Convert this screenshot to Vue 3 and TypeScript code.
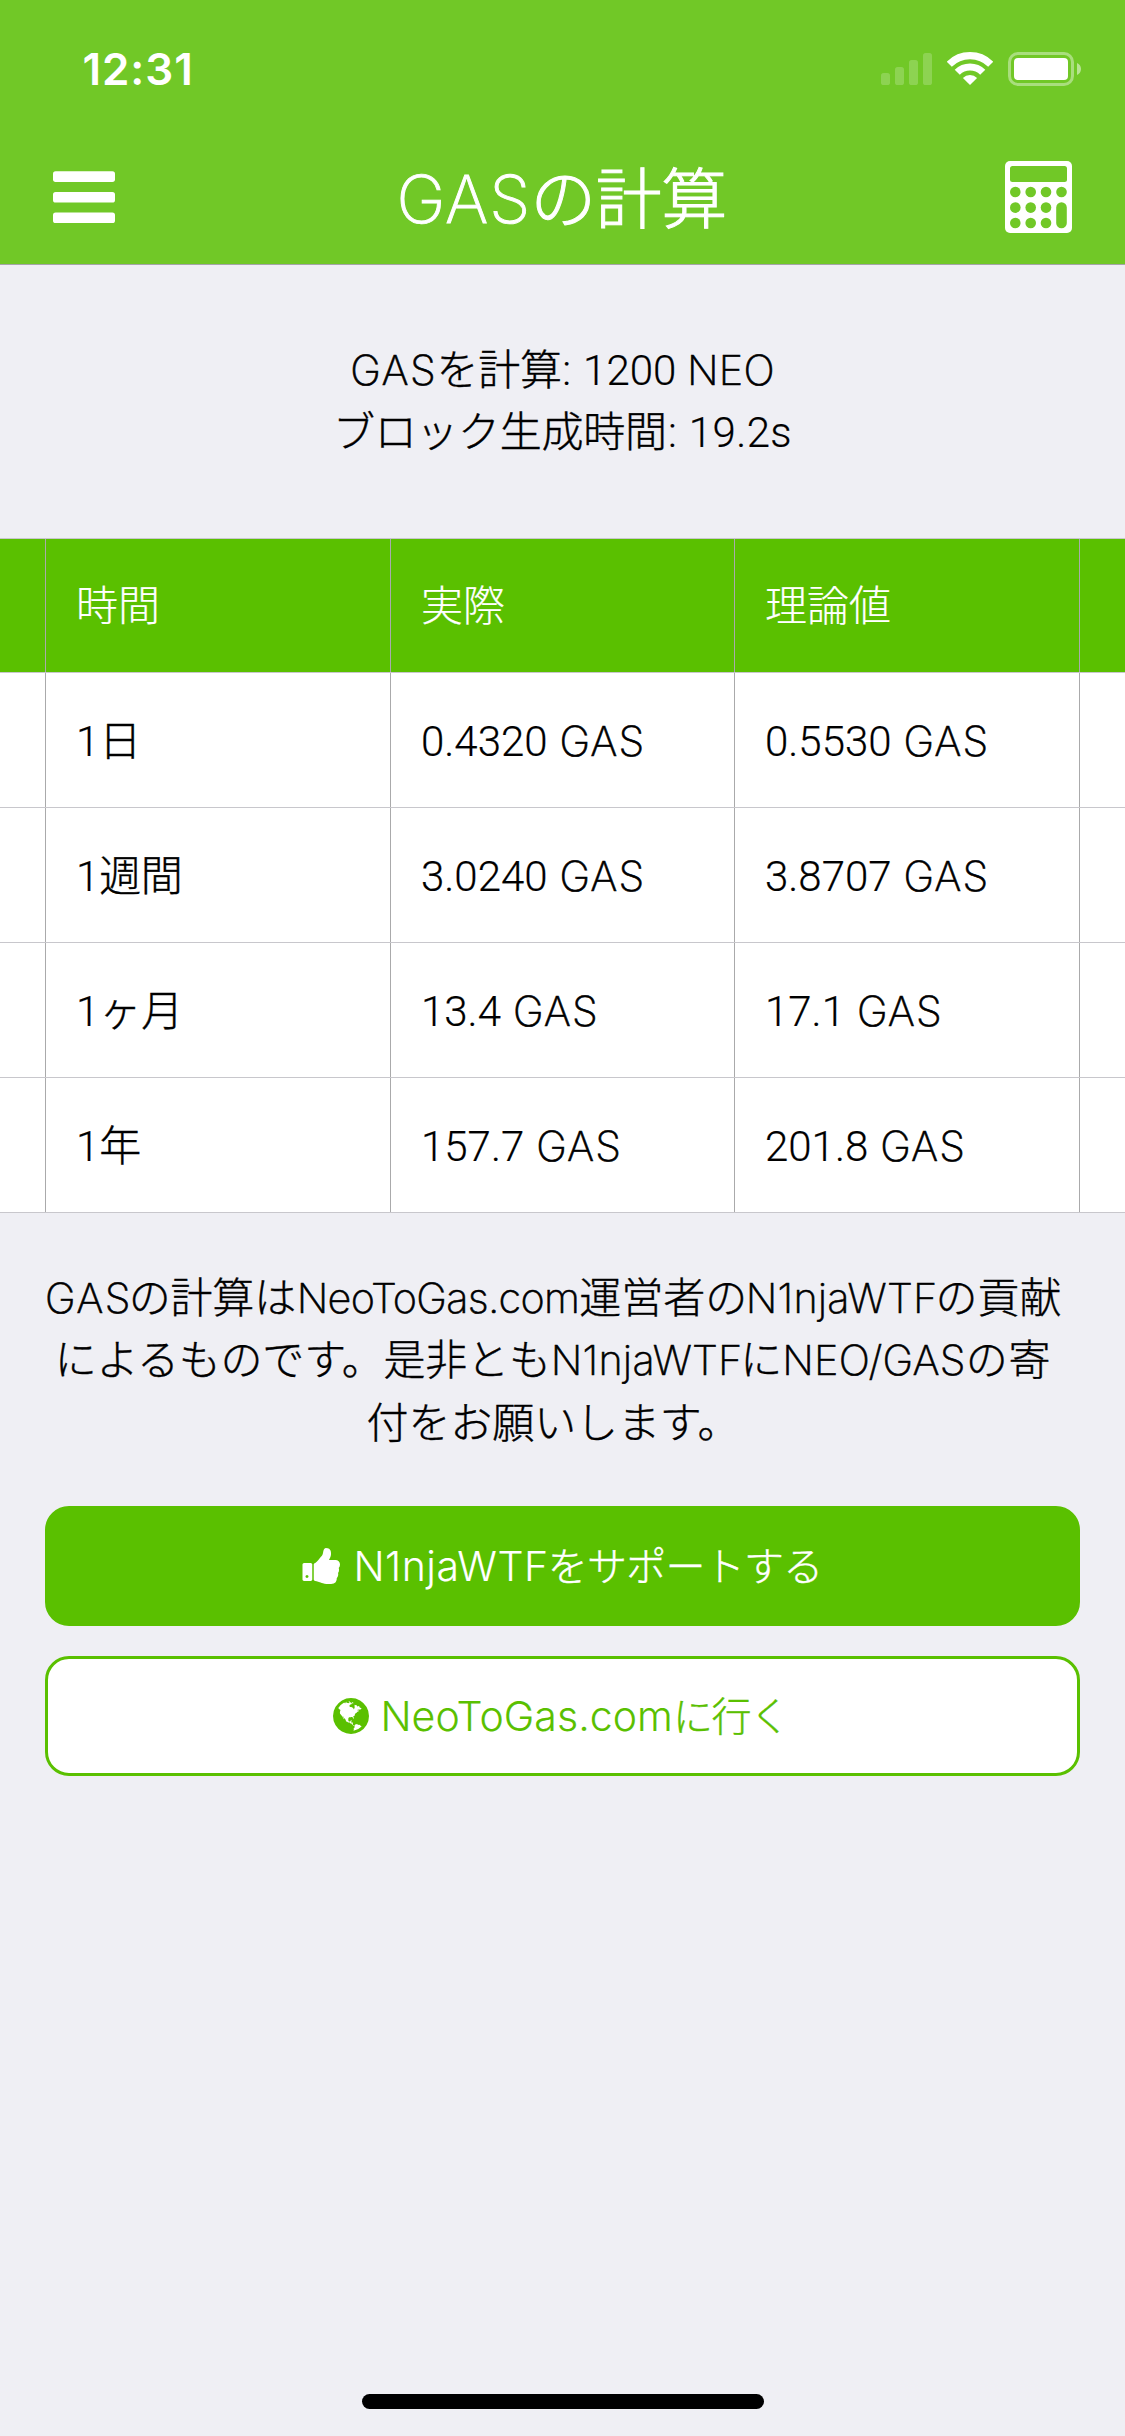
<script setup lang="ts">
// kind: la = Latin letters, nu = figures, ja = Japanese; track / lead are in px
interface Run {
  text: string
  kind: 'la' | 'nu' | 'ja'
  track?: number
  lead?: number
}

const la = (text: string, track = 0, lead = 0): Run => ({ text, kind: 'la', track, lead })
const nu = (text: string, track = 0, lead = 0): Run => ({ text, kind: 'nu', track, lead })
const ja = (text: string, track = 0, lead = 0): Run => ({ text, kind: 'ja', track, lead })

const spacing = (run: Run) => ({
  letterSpacing: `${run.track ?? 0}px`,
  marginLeft: `${run.lead ?? 0}px`,
})

const title: Run[] = [la('GAS', 1.1), ja('の計算', -0.6, -1.2)]

const summary: Run[][] = [
  [la('GAS', 1.5), ja('を計算', -0.25, -0.8), nu(': ', 0, 0.5), nu('1200 ', 0, 1.8), la('NEO', 0.2, 0.5)],
  [ja('ブロック生成時間', -0.29), nu(': ', 0, 1.3), nu('19.2s', 0.4, 1.8)],
]

const headings: Run[][] = [[ja('時間')], [ja('実際')], [ja('理論値')]]

const amount = (value: string): Run[] => [nu(`${value} `), la('GAS', 1.1, 1.8)]

const rows: Run[][][] = [
  [[nu('1'), ja('日')], amount('0.4320'), amount('0.5530')],
  [[nu('1'), ja('週間', -0.5)], amount('3.0240'), amount('3.8707')],
  [[nu('1'), ja('ヶ月')], amount('13.4'), amount('17.1')],
  [[nu('1'), ja('年')], amount('157.7'), amount('201.8')],
]

const credits: Run[][] = [
  [
    la('GAS', 1.5),
    ja('の計算は', -0.17, -3.3),
    la('NeoToGas.com', -0.7, 0.7),
    ja('運営者の'),
    la('N1njaWTF', 0.15, -1.4),
    ja('の貢献', 0, -1.7),
  ],
  [
    ja('によるものです。是非とも', -0.21),
    la('N1njaWTF', 0.2),
    ja('に', 0, -2.3),
    la('NEO/GAS', 0.25),
    ja('の寄', 0.8),
  ],
  [ja('付をお願いします。', -0.1)],
]

const support: Run[] = [la('N1njaWTF', 0.5), ja('をサポートする', -0.73, -1)]
const visit: Run[] = [la('NeoToGas.com', 0.05), ja('に行く', -1.45)]

const keys = [
  [10.3, 31], [25.7, 31], [41, 31], [56.5, 31],
  [10.3, 46.6], [25.7, 46.6], [41, 46.6],
  [10.3, 62], [25.7, 62], [41, 62],
]
</script>

<template>
  <div class="screen">
    <header class="top">
      <div class="status">
        <span class="clock">12:31</span>
        <div class="indicators">
          <svg width="51" height="34" viewBox="0 0 51 34" fill="#fff" fill-opacity="0.2">
            <rect x="0" y="21" width="9" height="12" rx="2.6" />
            <rect x="14" y="15" width="9" height="18" rx="2.6" />
            <rect x="28" y="8" width="9" height="25" rx="2.6" />
            <rect x="42" y="1" width="9" height="32" rx="2.6" />
          </svg>
          <svg width="46" height="34" viewBox="0 0 46 34" fill="none" stroke="#fff">
            <path d="M2.28 12.28A29.3 29.3 0 0 1 43.72 12.28" stroke-width="7.2" />
            <path d="M10.27 20.27A18 18 0 0 1 35.73 20.27" stroke-width="7.2" />
            <path d="M23 33L15.9 25.9A10 10 0 0 1 30.1 25.9Z" fill="#fff" stroke="none" />
          </svg>
          <svg width="73" height="34" viewBox="0 0 73 34">
            <rect x="1.5" y="1.5" width="63" height="31" rx="8.5" fill="none" stroke="#fff" stroke-opacity="0.4" stroke-width="3" />
            <rect x="6" y="6" width="54" height="22" rx="4" fill="#fff" />
            <path d="M69 11C71.4 12 73 14.3 73 17S71.4 22 69 23Z" fill="#fff" fill-opacity="0.5" />
          </svg>
        </div>
      </div>
      <div class="nav">
        <svg width="62" height="52" viewBox="0 0 62 52" fill="#fff">
          <rect x="0" y="0.3" width="62" height="10.6" rx="2.6" />
          <rect x="0" y="21" width="62" height="10.6" rx="2.6" />
          <rect x="0" y="41.5" width="62" height="10.5" rx="2.6" />
        </svg>
        <h1 class="title"><span v-for="(run, i) in title" :key="i" :class="run.kind" :style="spacing(run)">{{ run.text }}</span></h1>
        <svg width="67" height="72" viewBox="0 0 67 72">
          <rect width="67" height="72" rx="5" fill="#fff" />
          <g fill="#71c827">
            <rect x="5" y="5" width="57" height="16" rx="2.5" />
            <circle v-for="([x, y], i) in keys" :key="i" :cx="x" :cy="y" r="5.3" />
            <rect x="51.2" y="41.3" width="10.6" height="26" rx="5.3" />
          </g>
        </svg>
      </div>
    </header>

    <section class="summary">
      <div v-for="(line, i) in summary" :key="i" class="line"><span v-for="(run, j) in line" :key="j" :class="run.kind" :style="spacing(run)">{{ run.text }}</span></div>
    </section>

    <section class="table">
      <div class="row head">
        <div class="cell" v-for="(cell, i) in headings" :key="i"><span v-for="(run, j) in cell" :key="j" :class="run.kind" :style="spacing(run)">{{ run.text }}</span></div>
        <div class="cell"></div>
      </div>
      <div class="row" v-for="(row, r) in rows" :key="r">
        <div class="cell" v-for="(cell, i) in row" :key="i"><span v-for="(run, j) in cell" :key="j" :class="run.kind" :style="spacing(run)">{{ run.text }}</span></div>
        <div class="cell"></div>
      </div>
    </section>

    <section class="credits">
      <div v-for="(line, i) in credits" :key="i" class="line"><span v-for="(run, j) in line" :key="j" :class="run.kind" :style="spacing(run)">{{ run.text }}</span></div>
    </section>

    <section class="actions">
      <button class="button solid" type="button">
        <svg width="42" height="42" viewBox="0 0 1792 1792" fill="currentColor">
          <path d="M320 1344q0-26-19-45t-45-19q-27 0-45.500 19t-18.500 45q0 27 18.500 45.500t45.500 18.500q26 0 45-18.500t19-45.500zm160-512v640q0 26-19 45t-45 19h-288q-26 0-45-19t-19-45v-640q0-26 19-45t45-19h288q26 0 45 19t19 45zm1184 0q0 86-55 149 15 44 15 76 3 76-43 137 17 56 0 117-15 57-54 94 9 112-49 181-64 76-197 78h-129q-66 0-144-15.500t-121.500-29-120.500-39.500q-123-43-158-44-26-1-45-19.500t-19-44.500v-641q0-25 18-43.500t43-20.500q24-2 76-59t101-121q68-87 101-120 18-18 31-48t17.500-48.500 13.500-60.500q7-39 12.500-61t19.500-52 34-50q19-19 45-19 46 0 82.500 10.500t60 26 40 40.500 24 45 12 50 5 45 .5 39q0 38-9.500 76t-19 60-27.500 56q-3 6-10 18t-11 22-8 24h277q78 0 135 57t57 135z" />
        </svg>
        <span class="label"><span v-for="(run, i) in support" :key="i" :class="run.kind" :style="spacing(run)">{{ run.text }}</span></span>
      </button>
      <button class="button outline" type="button">
        <svg width="42" height="42" viewBox="0 0 1792 1792" fill="currentColor">
          <path d="M896 128q209 0 385.500 103t279.500 279.500 103 385.500-103 385.500-279.500 279.500-385.500 103-385.500-103-279.500-279.500-103-385.500 103-385.500 279.500-279.500 385.500-103zm274 521q-2 1-9.500 9.500t-13.500 9.500q2 0 4.500-5t5-11 3.500-7q6-7 22-15 14-6 52-12 34-8 51 11-2-2 9.500-13t14.500-12q3-2 15-4.500t15-7.500l2-22q-12 1-17.500-7t-6.500-21q0 2-6 8 0-7-4.500-8t-11.500 1-9 1q-10-3-15-7.500t-8-16.500-4-15q-2-5-9.500-11t-9.500-10q-1-2-2.500-5.500t-3-6.500-4-5.500-5.500-2.500-7 5-7.500 10-4.500 5q-3-2-6-1.500t-4.500 1-4.500 3-5 3.500q-3 2-8.500 3t-8.500 2q15-5-1-11-10-4-16-3 9-4 7.500-12t-8.500-14h5q-1-4-8.500-8.500t-17.500-8.500-13-6q-8-5-34-9.500t-33-.5q-5 6-4.500 10.500t4 14 3.500 12.500q1 6-5.500 13t-6.500 12q0 7 14 15.500t10 21.500q-3 8-16 16t-16 12q-5 8-1.500 18.500t10.500 16.500q2 2 1.500 4t-3.500 4.500-5.500 4-6.500 3.500l-3 2q-11 5-20.500-6t-13.500-26q-7-25-16-30-23-8-29 1-5-13-41-26-25-9-58-4 6-1 0-15-7-15-19-12 3-6 4-17.500t1-13.500q3-13 12-23 1-1 7-8.500t9.500-13.500.5-6q35 4 50-11 5-5 11.500-17t10.500-17q9-6 14-5.500t14.500 5.500 14.500 5q14 1 15.500-11t-7.500-20q12 1 3-17-4-7-8-9-12-4-27 5-8 4 2 8-1-1-9.500 10.500t-16.500 17.500-16-5q-1-1-5.500-13.500t-9.500-13.500q-8 0-16 15 3-8-11-15t-24-8q19-12-8-27-7-4-20.500-5t-19.500 4q-5 7-5.500 11.500t5 8 10.500 5.500 11.500 4 8.500 3q14 10 8 14-2 1-8.500 3.500t-11.500 4.500-6 4q-3 4 0 14t-2 14q-5-5-9-17.500t-7-16.500q7 9-25 6l-10-1q-4 0-16 2t-20.500 1-13.500-8q-4-8 0-20 1-4 4-2-4-3-11-9.500t-10-8.500q-46 15-94 41 6 1 12-1 5-2 13-6.500t10-5.500q34-14 42-7l5-5q14 16 20 25-7-4-30-1-20 6-22 12 7 12 5 18-4-3-11.500-10t-14.500-11-15-5q-16 0-22 1-146 80-235 222 7 7 12 8 4 1 5 9t2.500 11 11.500-3q9 8 3 19 1-1 44 27 19 17 21 21 3 11-10 18-1-2-9-9t-9-4q-3 5 .5 18.500t10.500 12.500q-7 0-9.500 16t-2.500 35.500-1 23.500l2 1q-3 12 5.500 34.500t21.500 19.500q-13 3 20 43 6 8 8 9 3 2 12 7.500t15 10 10 10.500q4 5 10 22.500t14 23.500q-2 6 9.500 20t10.500 23q-1 0-2.500 1t-2.500 1q3 7 15.500 14t15.500 13q1 3 2 10t3 11 8 2q2-20-24-62-15-25-17-29-3-5-5.500-15.500t-4.500-14.500q2 0 6 1.500t8.500 3.500 7.500 4 2 3q-3 7 2 17.500t12 18.500 17 19 12 13q6 6 14 19.500t0 13.500q9 0 20 10t17 20q5 8 8 26t5 24q2 7 8.500 13.500t12.500 9.500l16 8 13 7q5 2 18.500 10.500t21.500 11.500q10 4 16 4t14.500-2.500 13.500-3.500q15-2 29 15t21 21q36 19 55 11-2 1 .5 7.500t8 15.500 9 14.500 5.500 8.500q5 6 18 15t18 15q6-4 7-9-3 8 7 20t18 10q14-3 14-32-31 15-49-18 0-1-2.500-5.500t-4-8.500-2.500-8.500 0-7.500 5-3q9 0 10-3.500t-2-12.500-4-13q-1-8-11-20t-12-15q-5 9-16 8t-16-9q0 1-1.500 5.500t-1.500 6.500q-13 0-15-1 1-3 2.500-17.500t3.500-22.500q1-4 5.500-12t7.500-14.500 4-12.500-4.500-9.500-17.500-2.500q-19 1-26 20-1 3-3 10.500t-5 11.500-9 7q-7 3-24 2t-24-5q-13-8-22.500-29t-9.500-37q0-10 2.500-26.500t3-25-5.500-24.500q3-2 9-9.500t10-10.500q2-1 4.500-1.500t4.500 0 4-1.500 3-6q-1-1-4-3-3-3-4-3 7 3 28.500-1.500t27.500 1.500q15 11 22-2 0-1-2.500-9.500t-.5-13.500q5 27 29 9 3 3 15.500 5t17.500 5q3 2 7 5.500t5.500 4.500 5-.5 8.500-6.500q10 14 12 24 11 40 19 44 7 3 11 2t4.500-9.500 0-14-1.500-12.500l-1-8v-18l-1-8q-15-3-18.500-12t1.500-18.500 15-18.500q1-1 8-3.500t15.500-6.500 12.500-8q21-19 15-35 7 0 11-9-1 0-5-3t-7.500-5-4.500-2q9-5 2-16 5-3 7.500-11t7.500-10q9 12 21 2 7-8 1-16 5-7 20.500-10.500t18.500-9.500q7 2 8-2t1-12 3-12q4-5 15-9t13-5l17-11q3-4 0-4 18 2 31-11 10-11-6-20 3-6-3-9.500t-15-5.500q3-1 11.500-.5t10.500-1.500q15-10-7-16-17-5-43 12zm-163 877q206-36 351-189-3-3-12.500-4.500t-12.500-3.500q-18-7-24-8 1-7-2.500-13t-8-9-12.500-8-11-7q-2-2-7-6t-7-5.500-7.500-4.500-8.500-2-10 1l-3 1q-3 1-5.500 2.500t-5.500 3-4 3 0 2.500q-21-17-36-22-5-1-11-5.500t-10.500-7-10-1.500-11.500 7q-5 5-6 15t-2 13q-7-5 0-17.500t2-18.500q-3-6-10.500-4.500t-12 4.500-11.500 8.500-9 6.500-8.500 5.500-8.500 7.500q-3 4-6 12t-5 11q-2-4-11.500-6.500t-9.500-5.500q2 10 4 35t5 38q7 31-12 48-27 25-29 40-4 22 12 26 0 7-8 20.500t-7 21.500q0 6 2 16z" />
        </svg>
        <span class="label"><span v-for="(run, i) in visit" :key="i" :class="run.kind" :style="spacing(run)">{{ run.text }}</span></span>
      </button>
    </section>

    <div class="home-bar"></div>
  </div>
</template>

<style>
body {
  background: #efeff4;
}
</style>

<style scoped>
.screen {
  display: flex;
  flex-direction: column;
  width: 1125px;
  height: 2436px;
  overflow: hidden;
  background: #efeff4;
  color: #000;
  font-family: 'Noto Sans CJK JP', sans-serif;
  font-size: 42px;
  font-weight: 300;
}

svg {
  display: block;
  flex: none;
}

.la,
.nu,
.ja {
  line-height: 0;
  white-space: pre;
}

.la {
  font-family: 'Inter', sans-serif;
  font-size: 41.3px;
  font-weight: 200;
  -webkit-text-stroke: 0.6px currentColor;
}

.nu {
  font-family: 'Roboto', sans-serif;
  -webkit-text-stroke: 0.2px currentColor;
}

.ja {
  -webkit-text-stroke: 0.4px currentColor;
}

.top {
  height: 264px;
  border-bottom: 1px solid #a5a5a8;
  background: #71c827;
  color: #fff;
}

.status {
  display: flex;
  align-items: center;
  justify-content: space-between;
  height: 138px;
  padding: 0 44px 0 82.5px;
  box-sizing: border-box;
}

.clock {
  font-family: 'Inter', sans-serif;
  font-size: 44px;
  font-weight: 600;
  line-height: 54px;
  letter-spacing: 0.9px;
}

.indicators {
  display: flex;
  gap: 15px;
}

.nav {
  display: flex;
  align-items: center;
  height: 126px;
  padding: 0 53px 8px;
  box-sizing: border-box;
}

.title {
  flex: 1;
  margin: 0;
  padding: 0 0 6px 3px;
  font-size: 66px;
  font-weight: 300;
  line-height: 90px;
  text-align: center;
}

.title .la {
  font-size: 66px;
  -webkit-text-stroke-width: 0.9px;
}

.title .ja {
  -webkit-text-stroke-width: 1px;
}

.summary {
  height: 273px;
  padding-top: 71px;
  box-sizing: border-box;
}

.line {
  line-height: 62.33px;
  text-align: center;
  white-space: nowrap;
}

.table {
  border-top: 1px solid #c8c7cc;
}

.row {
  display: grid;
  grid-template-columns: 345px 344px 345px 46px;
  height: 134px;
  padding-left: 45px;
  border-bottom: 1px solid #c8c7cc;
  background: #fff;
}

.head {
  height: 133px;
  background: #5ac000;
  color: #fff;
}

.cell {
  padding-left: 30px;
  border-left: 1px solid #aaaaab;
  line-height: 130px;
  white-space: nowrap;
}

.head .cell {
  line-height: 128px;
}

.head .ja {
  -webkit-text-stroke-width: 0.2px;
}

.credits {
  margin: 51px 64px 0 45px;
}

.actions {
  display: flex;
  flex-direction: column;
  gap: 30px;
  padding: 55px 45px 0;
}

.button {
  display: flex;
  align-items: center;
  justify-content: center;
  height: 120px;
  padding: 0;
  border: 3px solid #5ac000;
  border-radius: 24px;
  box-sizing: border-box;
  font: inherit;
}

.solid {
  gap: 10px;
  padding-right: 1px;
  background: #5ac000;
  color: #fff;
}

.outline {
  gap: 8px;
  padding-right: 6px;
  background: #fff;
  color: #5ac000;
}

.label {
  padding-bottom: 4px;
  font-size: 40px;
  line-height: 60px;
}

.label .la {
  font-size: 41px;
  font-weight: 300;
  -webkit-text-stroke-width: 0.1px;
}

.home-bar {
  width: 402px;
  height: 15px;
  margin: auto auto 27px;
  border-radius: 8px;
  background: #000;
}
</style>
